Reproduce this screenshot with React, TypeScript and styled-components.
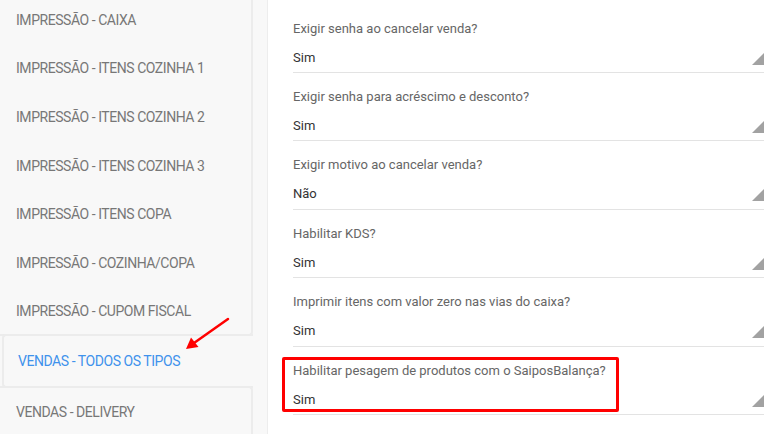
import styled, { createGlobalStyle } from 'styled-components';

const GlobalStyle = createGlobalStyle`
	html, body {
		margin: 0;
		height: 100%;
		overflow: hidden;
		background: #fff;
		font-family: Roboto, "Liberation Sans", Arial, sans-serif;
	}
`;

const tabs = [
	'IMPRESSÃO - CAIXA',
	'IMPRESSÃO - ITENS COZINHA 1',
	'IMPRESSÃO - ITENS COZINHA 2',
	'IMPRESSÃO - ITENS COZINHA 3',
	'IMPRESSÃO - ITENS COPA',
	'IMPRESSÃO - COZINHA/COPA',
	'IMPRESSÃO - CUPOM FISCAL',
	'VENDAS - TODOS OS TIPOS',
	'VENDAS - DELIVERY',
];
const activeTab = 7;

const settings = [
	{ label: 'Exigir senha ao cancelar venda?', value: 'Sim' },
	{ label: 'Exigir senha para acréscimo e desconto?', value: 'Sim' },
	{ label: 'Exigir motivo ao cancelar venda?', value: 'Não' },
	{ label: 'Habilitar KDS?', value: 'Sim' },
	{ label: 'Imprimir itens com valor zero nas vias do caixa?', value: 'Sim' },
	{ label: 'Habilitar pesagem de produtos com o SaiposBalança?', value: 'Sim', highlight: true },
];

const Page = styled.div`
	display: flex;
	height: 434px;
`;

const Sidebar = styled.aside`
	position: relative;
	width: 268px;
	flex-shrink: 0;
	box-sizing: border-box;
	background: #f8f8f8;
	border-right: 1px solid #ededed;
	overflow: hidden;
`;

const TabList = styled.ul`
	list-style: none;
	margin: -4.5px 0 0;
	padding: 0;
	width: 253px;
`;

type TabPos = 'before' | 'active' | 'after' | 'plain';

const Tab = styled.li<{ $pos: TabPos }>`
	display: flex;
	align-items: center;
	box-sizing: border-box;
	height: 48.67px;
	padding-left: 16px;
	font-size: 14px;
	letter-spacing: -0.45px;
	color: #777;
	border-right: 2px solid #ececec;

	${({ $pos }) =>
		$pos === 'before' &&
		`
		border-bottom: 2px solid #ececec;
		border-bottom-right-radius: 4px;
	`}

	${({ $pos }) =>
		$pos === 'after' &&
		`
		border-top: 2px solid #ececec;
		border-top-right-radius: 4px;
		height: 50.67px;
	`}

	${({ $pos }) =>
		$pos === 'active' &&
		`
		height: 54px;
		margin: -2px 0 -2px 2px;
		padding-left: 14px;
		color: #3f92ec;
		border: 2px solid #ececec;
		border-right: none;
		border-radius: 4px 0 0 4px;
	`}
`;

const Arrow = styled.svg`
	position: absolute;
	left: 180px;
	top: 312px;
`;

const Content = styled.main`
	flex: 1;
	padding: 4.6px 19px 0 25px;
`;

const Row = styled.div`
	position: relative;
	padding: 15px 0 5.4px;
	border-bottom: 1px solid #e3e3e3;
`;

const Label = styled.div`
	font-size: 13px;
	line-height: 18px;
	color: #666;
`;

const ValueLine = styled.div`
	display: flex;
	justify-content: space-between;
	align-items: flex-end;
	margin-top: 11px;
	font-size: 13px;
	line-height: 18px;
	color: #333;
`;

const Caret = styled.span`
	width: 0;
	height: 0;
	margin-bottom: 2px;
	border-left: 12px solid transparent;
	border-bottom: 12px solid #a2a2a2;
`;

const Highlight = styled.div`
	position: absolute;
	left: -11px;
	top: 10.4px;
	width: 337px;
	height: 55px;
	box-sizing: border-box;
	border: 3px solid #f00;
	border-radius: 2px;
	pointer-events: none;
`;

const tabPos = (i: number): TabPos => {
	if (i === activeTab) return 'active';
	if (i === activeTab - 1) return 'before';
	if (i === activeTab + 1) return 'after';
	return 'plain';
};

export default function App() {
	return (
		<>
			<GlobalStyle />
			<Page>
				<Sidebar>
					<TabList>
						{tabs.map((t, i) => (
							<Tab key={t} $pos={tabPos(i)}>
								{t}
							</Tab>
						))}
					</TabList>
					<Arrow width="52" height="42" viewBox="0 0 52 42">
						<line x1="48" y1="7" x2="14" y2="31" stroke="#f00" strokeWidth="2.5" strokeLinecap="round" />
						<polygon points="6,37 11,25.5 18.5,35" fill="#f00" />
					</Arrow>
				</Sidebar>
				<Content>
					{settings.map((s) => (
						<Row key={s.label}>
							<Label>{s.label}</Label>
							<ValueLine>
								<span>{s.value}</span>
								<Caret />
							</ValueLine>
							{s.highlight && <Highlight />}
						</Row>
					))}
				</Content>
			</Page>
		</>
	);
}
